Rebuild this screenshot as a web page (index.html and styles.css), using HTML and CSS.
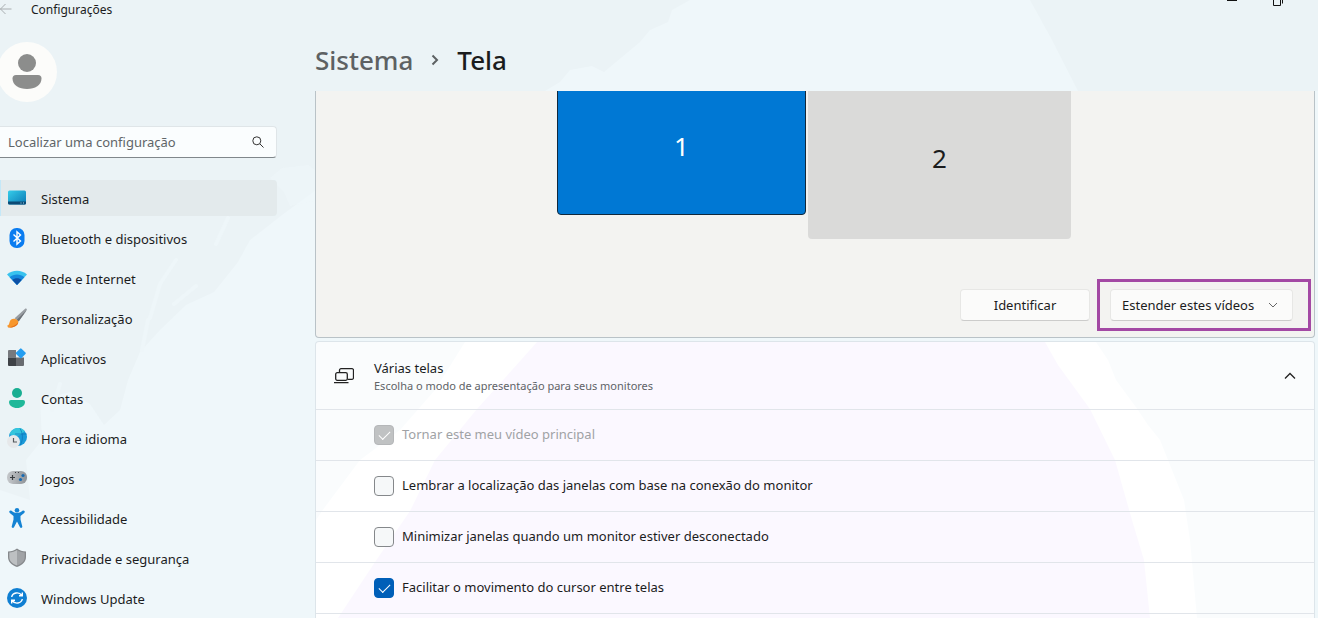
FILE: index.html
```html
<!DOCTYPE html>
<html lang="pt-BR">
<head>
    <meta charset="UTF-8">
    <meta name="viewport" content="width=device-width, initial-scale=1.0">
    <title>Configurações</title>
    <link rel="stylesheet" href="styles.css">
</head>
<body>
    <!-- wallpaper showing through the window -->
    <svg class="wallpaper" viewBox="0 0 1318 618" preserveAspectRatio="none" aria-hidden="true">
        <path fill="#eff7fa" d="M690 0L672 10 668 22 650 30 640 42 604 72 592 66 570 70 560 82 545 91H490L400 110 316 190 282 215 250 240 238 262 214 292 186 305 160 330 140 352 128 380 120 410 104 425 90 404 70 392 40 400 42 440 26 460 30 500 0 490V618H1318V91H1078L1052 40 1030 0Z"/>
        <path fill="#eff7fa" d="M270 178L282 168 308 165 318 172V200L290 206 284 192Z" opacity=".6"/>
        <path class="streaks" d="M176 260l-16 24-10 34M228 218l-12 26M148 320l-6 30M196 286l-22 18M60 384l-8 26"/>
        <path fill="white" d="M465 342L435 390L400 430L360 460L322 511L316 520V618H1197L1190 540L1184 500L1160 440L1148 425L1138 410L1116 380L1108 360L1096 342Z"/>
        <path fill="#f4ebff" d="M537 342L477 409L435 460L410 511L375 562L338 618H1150L1144 560L1132 520L1115 460L1090 409L1058 365L1045 342Z"/>
    </svg>

    <header class="titlebar">
        <button class="back" type="button" aria-label="Voltar">
            <svg width="12" height="12" viewBox="0 0 12 12"><path d="M11.500 6H0M5.500 1L.5 6l5 5"/></svg>
        </button>
        <span class="window-title">Configurações</span>
        <div class="window-controls">
            <button type="button" aria-label="Minimizar">
                <svg width="12" height="8" viewBox="0 0 12 8"><path d="M1 .5h10"/></svg>
            </button>
            <button type="button" aria-label="Restaurar">
                <svg width="12" height="8" viewBox="0 0 12 8"><path d="M1.500 0v5.500h7V0M10.500 0v3.500"/></svg>
            </button>
        </div>
    </header>

    <div class="layout">
        <aside class="sidebar">
            <svg class="avatar" width="57" height="60" viewBox="3 0 57 60" role="img" aria-label="Conta">
                <circle cx="30" cy="30" r="30" fill="#fcfcfa"/>
                <circle cx="30" cy="21" r="9" fill="#8c8d8c"/>
                <path fill="#8c8d8c" d="M19 33h22a3.500 3.500 0 0 1 3.500 3.500C44.500 43 38 47 30 47s-14.500-4-14.500-10.500A3.500 3.500 0 0 1 19 33z"/>
            </svg>

            <label class="search">
                <input type="text" placeholder="Localizar uma configuração" aria-label="Localizar uma configuração">
                <svg width="12" height="12" viewBox="0 0 12 12"><circle cx="4.800" cy="4.800" r="4"/><path d="M7.800 7.800l3.700 3.700"/></svg>
            </label>

            <nav class="menu">
                <a class="menu-item active" href="#">
                    <svg width="20" height="20" viewBox="0 0 20 20">
                        <defs><linearGradient id="sys" x1="0" y1="0" x2="1" y2="1"><stop offset="0" stop-color="#35cdea"/><stop offset="1" stop-color="#0a78b4"/></linearGradient></defs>
                        <rect x="1" y="2.500" width="18" height="14" rx="1.500" fill="url(#sys)"/>
                        <path fill="#0c4a75" d="M1 13.500h18V15a1.500 1.500 0 0 1-1.500 1.500h-15A1.500 1.500 0 0 1 1 15z"/>
                        <path fill="#9fe0f5" d="M13.500 14.500h1v1h-1zM16 14.500h1v1h-1z"/>
                    </svg>
                    <span>Sistema</span>
                </a>
                <a class="menu-item" href="#">
                    <svg width="20" height="20" viewBox="0 0 20 20">
                        <rect x="2.500" y="0" width="15" height="20" rx="7" fill="#0a7cf0"/>
                        <path fill="none" stroke="#fff" stroke-width="1.400" d="M6.500 6.500l7 6.500-3.500 3.200V3.800L13.500 7l-7 6.500"/>
                    </svg>
                    <span>Bluetooth e dispositivos</span>
                </a>
                <a class="menu-item" href="#">
                    <svg width="20" height="20" viewBox="0 0 20 20">
                        <path fill="#39c2ee" d="M0 6.500C5.500 1.600 14.500 1.600 20 6.500L10 17z"/>
                        <path fill="#1688dc" d="M2.600 9.200c4.200-3.600 10.600-3.600 14.800 0L10 17z"/>
                        <path fill="#0c4fa5" d="M5.300 12c2.600-2.300 6.800-2.300 9.400 0L10 17z"/>
                    </svg>
                    <span>Rede e Internet</span>
                </a>
                <a class="menu-item" href="#">
                    <svg width="20" height="20" viewBox="0 0 20 20">
                        <path fill="#989da2" d="M18.400.6c1.200-.3 1.800.5 1.200 1.700l-8 11.200-4-3.200z"/>
                        <path fill="#6b7076" d="M19.600 2.300l-8 11.200-2-1.600z"/>
                        <path fill="#f7962c" d="M7.300 10.700c2.500.2 4 1.700 4 3.700-1 3.800-5.500 5.600-10.300 5 0-.8-.6-1.400-1-1.700 2-.3 2-1.800 2.600-3.800.7-2.300 2.500-3.400 4.700-3.200z"/>
                        <path fill="#e06c1a" d="M1 19.400c3.500-.6 7.600-2 10.300-5-1 3.800-5.500 5.600-10.300 5z"/>
                    </svg>
                    <span>Personalização</span>
                </a>
                <a class="menu-item" href="#">
                    <svg width="20" height="20" viewBox="0 0 20 20">
                        <path fill="#77797e" d="M2 2h7v7.500H1V3a1 1 0 0 1 1-1z"/>
                        <path fill="#3f4247" d="M1 9.500h8V18H2a1 1 0 0 1-1-1z"/>
                        <path fill="#686b70" d="M9 9.500h8V17a1 1 0 0 1-1 1H9z"/>
                        <rect x="10" y="1.500" width="7.600" height="7.600" rx="1" fill="#249df0" transform="rotate(45 13.800 5.300)"/>
                    </svg>
                    <span>Aplicativos</span>
                </a>
                <a class="menu-item" href="#">
                    <svg width="20" height="20" viewBox="0 0 20 20">
                        <circle cx="10" cy="5" r="5" fill="#19ae92"/>
                        <path fill="#1fb899" d="M4 12h12a2 2 0 0 1 2 2c0 3.600-3.500 6-8 6s-8-2.400-8-6a2 2 0 0 1 2-2z"/>
                    </svg>
                    <span>Contas</span>
                </a>
                <a class="menu-item" href="#">
                    <svg width="20" height="20" viewBox="0 0 20 20">
                        <circle cx="11" cy="9" r="9" fill="#1b9ad8"/>
                        <path fill="#35c5dd" d="M2.500 6C5-1 14-2 17.500 3 14 8 8 9 2.500 6z"/>
                        <path fill="none" stroke="#0c73b8" stroke-width=".7" d="M13 .5c3 5 3.500 11 0 17M8 6h11.500"/>
                        <circle cx="6.500" cy="13.500" r="6.500" fill="#e6e8ea"/>
                        <path fill="none" stroke="#55595d" stroke-width="1.200" d="M6.500 10v4H10"/>
                    </svg>
                    <span>Hora e idioma</span>
                </a>
                <a class="menu-item" href="#">
                    <svg width="20" height="20" viewBox="0 0 20 20">
                        <defs><linearGradient id="pad" x1="0" y1="0" x2="1" y2="0"><stop offset="0" stop-color="#c5c8cb"/><stop offset="1" stop-color="#8d9297"/></linearGradient></defs>
                        <rect y="3" width="20" height="13" rx="6" fill="url(#pad)"/>
                        <path fill="none" stroke="#3b3f43" stroke-width="1.200" d="M3 9.500h5M5.500 7v5"/>
                        <path fill="#3b3f43" d="M8 4h1v1H8zM11 4h1v1h-1z"/>
                        <circle cx="16" cy="7.500" r="1.600" fill="#176bb3"/>
                        <circle cx="13.500" cy="11.500" r="1.600" fill="#176bb3"/>
                    </svg>
                    <span>Jogos</span>
                </a>
                <a class="menu-item" href="#">
                    <svg width="20" height="20" viewBox="0 0 20 20">
                        <circle cx="10" cy="2.300" r="2.300" fill="#1583d3"/>
                        <path fill="#1583d3" d="M2.500 3c.5-.7 1.300-.7 2-.3C8 5.600 12 5.600 15.500 2.700c.7-.4 1.500-.4 2 .3.500.7.300 1.400-.3 1.900L13.500 8v3.500l1.800 7c.2 1.300-1.600 2-2.300.7L10 13.500l-3 5.700c-.7 1.300-2.500.6-2.300-.7l1.800-7V8L2.800 4.900c-.6-.5-.8-1.200-.3-1.900z"/>
                    </svg>
                    <span>Acessibilidade</span>
                </a>
                <a class="menu-item" href="#">
                    <svg width="20" height="20" viewBox="0 0 20 20">
                        <path fill="#86898c" d="M10 .5c2.500 2 5.500 2.800 9 3V9c0 4.800-3.500 8-9 10-5.500-2-9-5.200-9-10V3.500c3.500-.2 6.500-1 9-3z"/>
                        <path fill="#a0a3a6" d="M10 2c2.200 1.600 4.800 2.300 7.700 2.600V9c0 4-2.700 6.700-7.700 8.600z"/>
                        <path fill="#bdc0c2" d="M10 2C7.800 3.600 5.200 4.300 2.300 4.600V9c0 4 2.700 6.700 7.700 8.600z"/>
                    </svg>
                    <span>Privacidade e segurança</span>
                </a>
                <a class="menu-item" href="#">
                    <svg width="20" height="20" viewBox="0 0 20 20">
                        <circle cx="10" cy="10" r="10" fill="#0f7fd2"/>
                        <path fill="none" stroke="#fff" stroke-width="1.400" d="M4.700 9C5.500 4.500 12 3.300 14.800 7.500M15.300 4.500v3.300H12M15.300 11c-.8 4.500-7.300 5.700-10.100 1.500M4.700 15.500v-3.300H8"/>
                    </svg>
                    <span>Windows Update</span>
                </a>
            </nav>
        </aside>

        <main class="content">
            <h1 class="breadcrumb">
                <a href="#">Sistema</a>
                <svg width="8" height="12" viewBox="0 0 8 12"><path d="M1.500 1.500L6 6l-4.500 4.500"/></svg>
                <span>Tela</span>
            </h1>

            <div class="scroller">
                <section class="arrangement">
                    <div class="displays">
                        <button class="display display-main" type="button">1</button>
                        <button class="display display-second" type="button">2</button>
                    </div>
                    <div class="actions">
                        <button class="btn" type="button">Identificar</button>
                        <div class="highlight">
                            <div class="dropdown">
                                <select aria-label="Modo de exibição">
                                    <option>Estender estes vídeos</option>
                                    <option>Duplicar estes vídeos</option>
                                </select>
                                <svg width="10" height="6" viewBox="0 0 10 6"><path d="M1 1l4 4 4-4"/></svg>
                            </div>
                        </div>
                    </div>
                </section>

                <section class="card">
                    <button class="card-header" type="button" aria-expanded="true">
                        <svg class="card-icon" width="20" height="20" viewBox="0 0 20 20">
                            <rect x="1.700" y="6.700" width="11.600" height="7.600" rx="1.500"/>
                            <path d="M5.500 6.500V4.200A1.500 1.500 0 0 1 7 2.700h11a1.500 1.500 0 0 1 1.500 1.500v7.600a1.500 1.500 0 0 1-1.500 1.500h-4.500M0 16.700h14.500"/>
                        </svg>
                        <span class="card-text">
                            <span class="card-title">Várias telas</span>
                            <span class="card-desc">Escolha o modo de apresentação para seus monitores</span>
                        </span>
                        <svg class="chevron" width="12" height="8" viewBox="0 0 12 8"><path d="M1 6.500l5-5 5 5"/></svg>
                    </button>
                    <label class="option disabled"><input type="checkbox" checked disabled><span>Tornar este meu vídeo principal</span></label>
                    <label class="option"><input type="checkbox"><span>Lembrar a localização das janelas com base na conexão do monitor</span></label>
                    <label class="option"><input type="checkbox"><span>Minimizar janelas quando um monitor estiver desconectado</span></label>
                    <label class="option"><input type="checkbox" checked><span>Facilitar o movimento do cursor entre telas</span></label>
                </section>
            </div>
        </main>
    </div>
</body>
</html>
```
FILE: styles.css
```css
* {
    box-sizing: border-box;
}
body {
    margin: 0;
    height: 100vh;
    display: flex;
    flex-direction: column;
    overflow: hidden;
    background-color: #ebf3f6;
    color: #1b1c1d;
    font-family: "Noto Sans", "Open Sans", sans-serif;
    font-size: 13px;
    line-height: 20px;
}
button, input, select {
    font: inherit;
    color: inherit;
}
button {
    border: none;
    background: none;
    padding: 0;
}
a {
    color: inherit;
    text-decoration: none;
}
svg {
    display: block;
    flex: none;
}

/* the wallpaper lies under the whole window */
.wallpaper {
    position: absolute;
    top: 0;
    left: 0;
    width: 100%;
    height: 100%;
    z-index: -1;
}
.streaks {
    fill: none;
    stroke: #eef6f9;
    stroke-width: 4;
    stroke-linecap: round;
}

/* title bar */
.titlebar {
    display: flex;
    height: 20px;
    font-size: 12px;
}
.back {
    width: 31px;
    padding-bottom: 2px;
}
.back svg {
    fill: none;
    stroke: #a9aeb1;
}
.window-controls {
    display: flex;
    align-items: flex-start;
    gap: 34px;
    margin-left: auto;
    padding-right: 34px;
}
.window-controls svg {
    fill: none;
    stroke: #111;
}

.layout {
    display: flex;
    flex: 1;
    gap: 38px;
    min-height: 0;
}

/* sidebar */
.sidebar {
    flex: none;
    width: 277px;
    padding-top: 22px;
}
.search {
    display: flex;
    align-items: center;
    height: 32px;
    margin-top: 24px;
    padding: 0 12px 0 8px;
    border: 1px solid #dfe5e8;
    border-left: none;
    border-bottom-color: #80878b;
    border-radius: 0 4px 4px 0;
    background-color: #fafdfe;
}
.search input {
    flex: 1;
    min-width: 0;
    padding: 0;
    border: none;
    outline: none;
    background: none;
}
.search input::placeholder {
    color: #606568;
    opacity: 1;
}
.search svg {
    fill: none;
    stroke: #333;
}
.menu {
    display: flex;
    flex-direction: column;
    gap: 4px;
    margin-top: 22px;
}
.menu-item {
    display: flex;
    align-items: center;
    gap: 14px;
    height: 36px;
    padding: 2px 7px 0;
    border-radius: 0 4px 4px 0;
}
.menu-item svg {
    margin-bottom: 2px;
}
.menu-item.active {
    background-color: #e3eaec;
    box-shadow: inset 1px 0 #c4e8f8;
}

/* content */
.content {
    display: flex;
    flex: 1;
    flex-direction: column;
    min-width: 0;
}
.breadcrumb {
    display: flex;
    align-items: center;
    gap: 18px;
    height: 71px;
    margin: 0;
    padding-top: 8px;
    font-size: 26px;
    font-weight: 500;
}
.breadcrumb a {
    color: #5d6163;
}
.breadcrumb svg {
    fill: none;
    stroke: #5d6163;
    stroke-width: 2;
}
.scroller {
    display: flex;
    flex: 1;
    flex-direction: column;
    gap: 3px;
    min-height: 0;
    padding-right: 3px;
    overflow: hidden;
}

/* display arrangement */
.arrangement {
    flex: none;
    margin-top: -12px;
    border: 1px solid #b9c2c7;
    border-top: none;
    border-radius: 0 0 4px 4px;
    background-color: #f3f3f1;
}
.displays {
    display: flex;
    align-items: flex-start;
    justify-content: center;
    gap: 2px;
    height: 200px;
    padding-right: 2px;
}
.display {
    padding-bottom: 2px;
    border-radius: 4px;
    font-size: 26px;
}
.display-main {
    width: 249px;
    height: 136px;
    border: 1px solid #10283c;
    background-color: #0078d4;
    color: white;
}
.display-second {
    width: 263px;
    height: 160px;
    background-color: #dadad9;
}
.actions {
    display: flex;
    align-items: center;
    justify-content: flex-end;
    gap: 7px;
    padding: 0 3px 6px;
}
.btn, .dropdown select {
    height: 32px;
    border: 1px solid #e7e7e5;
    border-bottom-color: #cccccb;
    border-radius: 4px;
    background-color: #fbfbfa;
}
.btn {
    width: 130px;
}
.highlight {
    padding: 7px 15px 7px 10px;
    border: 3px solid #a349a4;
}
.dropdown {
    position: relative;
}
.dropdown select {
    display: block;
    width: 183px;
    padding: 0 36px 0 11px;
    appearance: none;
}
.dropdown svg {
    position: absolute;
    top: 13px;
    right: 15px;
    fill: none;
    stroke: #666;
    pointer-events: none;
}

/* multiple displays card */
.card {
    flex: 1 0 auto;
    border: 1px solid #dde5ea;
    border-bottom: none;
    border-radius: 4px 4px 0 0;
    background-color: rgba(255, 255, 255, 0.65);
}
.card-header {
    display: flex;
    align-items: center;
    width: 100%;
    height: 67px;
    padding: 0 18px;
    text-align: left;
}
.card-icon, .chevron {
    fill: none;
    stroke: #222;
    stroke-width: 1.3;
}
.card-text {
    flex: 1;
    padding-top: 2px;
    margin-left: 20px;
}
.card-title, .card-desc {
    display: block;
    line-height: 17px;
}
.card-desc {
    color: #606367;
    font-size: 11px;
}
.option {
    display: flex;
    align-items: center;
    gap: 8px;
    height: 51px;
    padding-left: 58px;
    border-top: 1px solid #e1e5ea;
}
.option:last-child {
    height: 52px;
    border-bottom: 1px solid #e1e5ea;
}
.option span {
    padding-bottom: 2px;
}
.option.disabled {
    color: #a0a2a5;
}
.option input {
    display: grid;
    place-items: center;
    width: 20px;
    height: 20px;
    margin: 0;
    border: 1px solid #85888b;
    border-radius: 4px;
    background-color: #f6f8f9;
    appearance: none;
}
.option input:checked {
    border-color: #005fb8;
    background-color: #005fb8;
}
.option input:checked:disabled {
    border-color: #b5b7b9;
    background-color: #c0c2c3;
}
/* tick mark */
.option input:checked::before {
    content: "";
    width: 10px;
    height: 5px;
    margin-bottom: 3px;
    border-left: 1px solid white;
    border-bottom: 1px solid white;
    transform: rotate(-45deg);
}
```
